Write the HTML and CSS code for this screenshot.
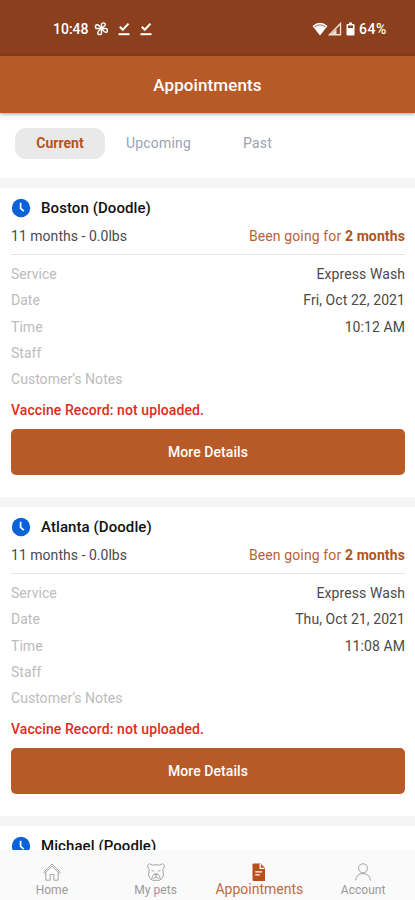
FILE: index.html
```html
<!DOCTYPE html>
<html lang="en">
<head>
<meta charset="utf-8">
<title>Appointments</title>
<link rel="stylesheet" href="styles.css">
</head>
<body>
<svg width="0" height="0" class="defs">
  <symbol id="clock" viewBox="0 0 20 20"><circle cx="10" cy="10" r="9.200" fill="#0b62d6"/><path d="M9.600 4.800v5.600l3.200 2.700" fill="none" stroke="#fff" stroke-width="1.700"/></symbol>
  <symbol id="done" viewBox="0 0 14 14"><path d="M2.800 4.800l3 3L11.500 1.600" fill="none" stroke="#fff" stroke-width="2"/><path d="M1.500 12.200h11" stroke="#fff" stroke-width="2"/></symbol>
</svg>
<div class="screen">
  <header class="status">
    <span class="time">10:48</span>
    <svg class="fan" viewBox="0 0 16 16" fill="none" stroke="#fff" stroke-width="1.500"><path d="M8 8V3.500a2.200 2.200 0 0 1 4.200 0C12.200 5.500 10 6 8 8zM8 8h4.300a2 2 0 0 1 0 4C10.500 12 10 10 8 8zM8 8v4.500a2 2 0 0 1-4 0C4 10.500 6 10 8 8zM8 8H3.500a2 2 0 0 1 0-4C5.500 4 6 6 8 8z"/></svg>
    <svg class="done"><use href="#done"/></svg>
    <svg class="done"><use href="#done"/></svg>
    <svg class="wifi" viewBox="0 0 16 14"><path d="M.5 4Q8-2.500 15.500 4L8 13.500z" fill="#fff"/><path d="M2.500 4.900Q8 .8 13.500 4.900" fill="none" stroke="#8b3f1c" stroke-width=".8"/></svg>
    <svg class="signal" viewBox="0 0 14 14"><path d="M1.500 12.800L12.500 1.500v11.300z" fill="none" stroke="#f1dfd8" stroke-width="1.400"/><path d="M3 12.500l5.500-5.600v5.600z" fill="#f1dfd8"/></svg>
    <svg class="battery" viewBox="0 0 9 14"><path d="M3 .5h3V2h1.500q1 0 1 1v9.500q0 1-1 1h-6q-1 0-1-1V3q0-1 1-1H3z" fill="#fff"/><path d="M2 3.500h5V6H2z" fill="#8b3f1c"/></svg>
    <span class="percent">64%</span>
  </header>
  <div class="appbar"><h1>Appointments</h1></div>
  <nav class="tabs"><span class="tab active">Current</span><span class="tab upcoming">Upcoming</span><span class="tab past">Past</span></nav>
  <main class="list">
    <article class="card">
      <div class="pet"><svg class="clock"><use href="#clock"/></svg><h2>Boston (Doodle)</h2></div>
      <div class="meta"><span class="age">11 months - 0.0lbs</span><span class="since">Been going for <b>2 months</b></span></div>
      <dl>
        <div><dt>Service</dt><dd>Express Wash</dd></div>
        <div><dt>Date</dt><dd>Fri, Oct 22, 2021</dd></div>
        <div><dt>Time</dt><dd>10:12 AM</dd></div>
        <div><dt>Staff</dt></div>
        <div><dt>Customer’s Notes</dt></div>
      </dl>
      <p class="vaccine">Vaccine Record: not uploaded.</p>
      <button>More Details</button>
    </article>
    <article class="card">
      <div class="pet"><svg class="clock"><use href="#clock"/></svg><h2>Atlanta (Doodle)</h2></div>
      <div class="meta"><span class="age">11 months - 0.0lbs</span><span class="since">Been going for <b>2 months</b></span></div>
      <dl>
        <div><dt>Service</dt><dd>Express Wash</dd></div>
        <div><dt>Date</dt><dd>Thu, Oct 21, 2021</dd></div>
        <div><dt>Time</dt><dd>11:08 AM</dd></div>
        <div><dt>Staff</dt></div>
        <div><dt>Customer’s Notes</dt></div>
      </dl>
      <p class="vaccine">Vaccine Record: not uploaded.</p>
      <button>More Details</button>
    </article>
    <article class="card">
      <div class="pet"><svg class="clock"><use href="#clock"/></svg><h2>Michael (Poodle)</h2></div>
    </article>
  </main>
  <nav class="bottom">
    <div class="item"><svg viewBox="0 0 20 20"><path d="M1.500 10.500L10 2l8.500 8.500-1 1L10 4.300l-7.500 7.200zM3.800 10.500v7.700h4.400v-5.700h3.600v5.700h4.400v-7.700"/></svg><span>Home</span></div>
    <div class="item"><svg viewBox="0 0 20 20"><path d="M6.500 3.200Q2.500.5 1.700 3.500 1.500 6 3.200 7.500L2.600 13q.4 4 4 5.300h6.800q3.600-1.300 4-5.300l-.6-5.500q1.700-1.500 1.500-4-.8-3-4.800-.3-3.500-1-7 0zM5.500 8l2.500 1.500M14.500 8L12 9.500M8.500 12h3L10 13.500zM10 13.500v1.500M6 17q0-5 4-5t4 5M7.500 16.500L10 15l2.500 1.500"/></svg><span>My pets</span></div>
    <div class="item active"><svg viewBox="0 0 20 20"><path class="solid" d="M4.500 1.500h7l4.500 4.300v12.700q0 .5-.5.500h-11q-1 0-1-1v-15.500q0-1 1-1z"/><path class="cut" d="M11.200 2v4.300h4.300M6.200 9.800h7M6.200 12.800h4.500"/></svg><span>Appointments</span></div>
    <div class="item"><svg viewBox="0 0 20 20"><circle cx="10" cy="6.300" r="4.500"/><path d="M2.500 18.500q1-7 7.500-7t7.500 7"/></svg><span>Account</span></div>
  </nav>
</div>
</body>
</html>
```
FILE: styles.css
```css
* { box-sizing: border-box; margin: 0; padding: 0; }
body { font-family: Roboto, "Liberation Sans", sans-serif; font-size: 14px; letter-spacing: .03px; background: #fff; color: #4a4a4a; }
.defs { position: absolute; }
.screen { width: 415px; height: 900px; display: flex; flex-direction: column; overflow: hidden; }
.status { flex: none; height: 56px; background: #8b3f1c; color: #fff; display: flex; align-items: center; padding: 1px 28px 0 53px; font-weight: 500; letter-spacing: 0; }
.status svg { flex: none; }
.time { width: 41px; }
.fan { width: 15px; height: 15px; }
.done { width: 14px; height: 14px; margin-left: 8px; }
.wifi { width: 16px; height: 14px; margin-left: auto; }
.signal { width: 14px; height: 14px; }
.battery { width: 9px; height: 14px; margin: 0 4px 0 4px; }
.percent { letter-spacing: .6px; }
.appbar { flex: none; height: 57px; background: #b85a28; display: flex; align-items: center; justify-content: center; box-shadow: 0 1px 4px rgba(0,0,0,.4); z-index: 1; }
h1 { font-size: 17px; font-weight: 500; color: #fff; letter-spacing: .1px; }
.tabs { flex: none; height: 65px; display: flex; align-items: flex-start; padding: 15px 15px 0 15px; color: #9ba3ae; line-height: 31px; }
.tab { letter-spacing: .18px; }
.tab.active { width: 90px; text-align: center; border-radius: 11px; background: #e9e9e9; color: #b9531f; font-weight: 700; letter-spacing: 0; }
.upcoming { margin-left: 21px; width: 117px; }
.list { flex: 1; min-height: 0; overflow: hidden; background: #f5f5f5; padding-top: 10px; }
.card { height: 309px; margin-bottom: 10px; padding: 9px 10px 0 11px; background: #fff; }
.pet { display: flex; align-items: center; height: 22px; }
.clock { width: 20px; height: 20px; margin-right: 10px; }
h2 { font-size: 15px; font-weight: 500; color: #111; letter-spacing: .08px; }
.meta { display: flex; justify-content: space-between; align-items: center; height: 36px; padding-bottom: 1px; border-bottom: 1px solid #e6e6e6; }
.since { color: #b56339; letter-spacing: .12px; }
.since b { color: #b05422; font-weight: 700; }
dl { padding-top: 6px; }
dl div { display: flex; justify-content: space-between; height: 26.300px; line-height: 26.300px; }
dt { color: #bcbcbc; }
dd { letter-spacing: .08px; }
.vaccine { height: 37px; line-height: 37px; color: #df2b20; font-weight: 500; letter-spacing: .09px; }
button { display: block; width: 100%; height: 46px; border: 0; border-radius: 5px; background: #b85a28; color: #fff; font: 500 14px Roboto, sans-serif; letter-spacing: .08px; }
.bottom { flex: none; height: 50px; background: #fafafa; display: grid; grid-template-columns: repeat(4, 1fr); }
.item { display: flex; flex-direction: column; align-items: center; padding-top: 12px; font-size: 12px; color: #999; }
.item svg { width: 20px; height: 20px; flex: none; fill: none; stroke: #a5a5a5; stroke-width: 1; }
.item span { line-height: 16px; }
.item.active { color: #bd6a40; font-size: 14px; letter-spacing: 0; }
.item.active span { line-height: 14px; }
.item .solid { fill: #b9501c; stroke: none; }
.item .cut { stroke: #fff; stroke-width: 1.300; }
```
